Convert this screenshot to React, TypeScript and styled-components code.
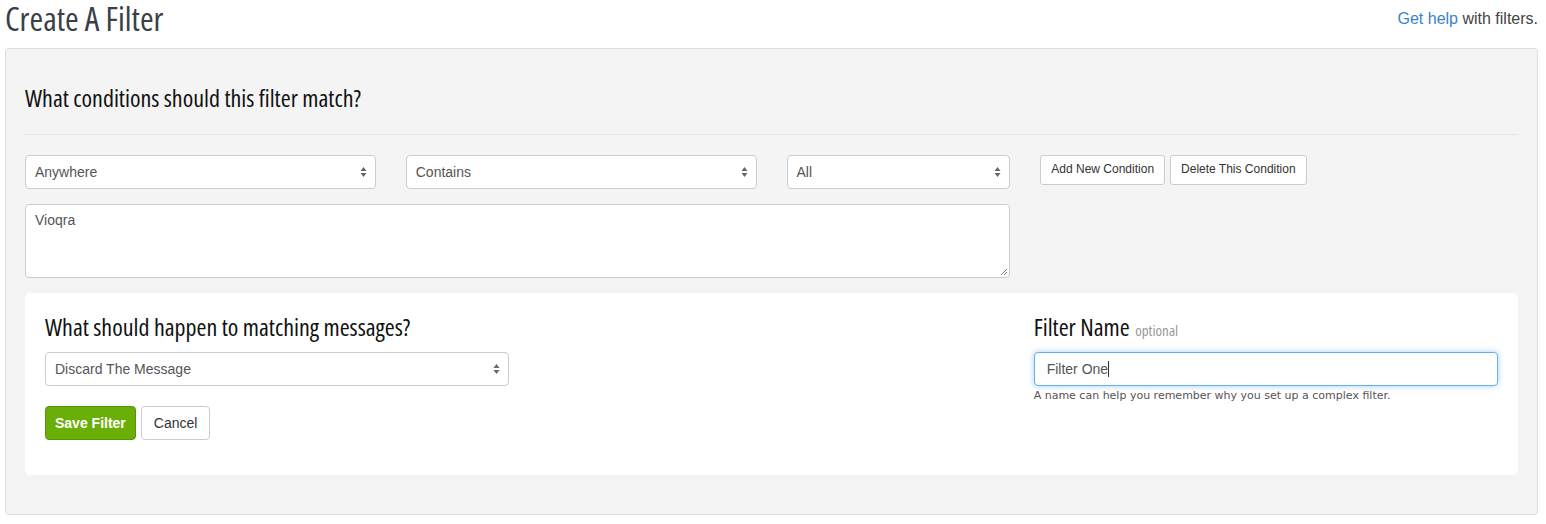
import { createGlobalStyle, styled } from "styled-components";

const GlobalStyle = createGlobalStyle`
	html, body {
		margin: 0;
		padding: 0;
		background: #ffffff;
	}
	body {
		font-family: "Liberation Sans", Arial, sans-serif;
		color: #333;
	}
	* {
		box-sizing: border-box;
	}
`;

const Page = styled.div`
	padding: 0 8px 0 5px;
`;

const Header = styled.div`
	display: flex;
	align-items: flex-start;
	justify-content: space-between;
	height: 48px;
	padding-top: 2px;
`;

const Title = styled.h1`
	margin: 0;
	font-family: "Open Sans", sans-serif;
	font-stretch: condensed;
	font-weight: 400;
	font-size: 33px;
	line-height: 34px;
	color: #3a4047;
`;

const HelpText = styled.p`
	margin: 0;
	padding-top: 8px;
	font-size: 16px;
	line-height: 18px;
	color: #444;

	a {
		color: #3a84c6;
		text-decoration: none;
	}
`;

const Panel = styled.div`
	background: #f4f4f4;
	border: 1px solid #ddd;
	border-radius: 4px;
	padding: 36px 19px 39px;
`;

const SectionTitle = styled.h2`
	margin: 0;
	height: 26px;
	font-family: "Open Sans", sans-serif;
	font-stretch: condensed;
	font-weight: 400;
	font-size: 24px;
	line-height: 26px;
	color: #111;
	white-space: nowrap;

	small {
		font-size: 15px;
		line-height: 1;
		color: #999;
		margin-left: 1px;
	}
`;

const Divider = styled.hr`
	margin: 23px 0 20px;
	border: 0;
	border-top: 1px solid #e6e6e6;
`;

const Grid = styled.div`
	display: grid;
	grid-template-columns: repeat(12, 1fr);
	column-gap: 30px;
	row-gap: 15px;
	align-items: start;
`;

const Col = styled.div<{ $span: number }>`
	grid-column: span ${(p) => p.$span};
`;

const SelectBox = styled.div`
	display: flex;
	align-items: center;
	justify-content: space-between;
	height: 34px;
	padding: 0 8px 0 9px;
	background: #fff;
	border: 1px solid #ccc;
	border-radius: 4px;
	font-size: 14px;
	color: #555;
`;

const TextInput = styled.div`
	display: flex;
	align-items: center;
	height: 34px;
	padding: 0 12px;
	background: #fff;
	border: 1px solid #66afe9;
	border-radius: 4px;
	box-shadow: 0 0 6px rgba(102, 175, 233, 0.6);
	font-size: 14px;
	color: #555;
`;

const Caret = styled.span`
	display: inline-block;
	width: 1px;
	height: 16px;
	background: #333;
`;

const TextArea = styled.div`
	position: relative;
	height: 74px;
	padding: 7px 9px;
	background: #fff;
	border: 1px solid #ccc;
	border-radius: 4px;
	font-size: 14px;
	color: #555;
`;

const Grip = styled.svg`
	position: absolute;
	right: 1px;
	bottom: 1px;
`;

const ButtonRow = styled.div`
	display: flex;
	gap: 5px;
`;

const SmallButton = styled.button`
	height: 30px;
	padding: 0 10px 2px;
	background: #fff;
	border: 1px solid #ccc;
	border-radius: 3px;
	font-family: "Liberation Sans", Arial, sans-serif;
	font-size: 12px;
	color: #333;
`;

const Button = styled.button<{ $primary?: boolean }>`
	height: 34px;
	padding: 0 ${(p) => (p.$primary ? 9 : 12)}px;
	background: ${(p) => (p.$primary ? "#6aae08" : "#fff")};
	border: 1px solid ${(p) => (p.$primary ? "#55930a" : "#ccc")};
	border-radius: 4px;
	font-family: "Liberation Sans", Arial, sans-serif;
	font-size: 14px;
	font-weight: ${(p) => (p.$primary ? 700 : 400)};
	color: ${(p) => (p.$primary ? "#fff" : "#333")};
`;

const Card = styled.div`
	margin-top: 15px;
	background: #fff;
	border-radius: 5px;
	padding: 21px 20px 35px;
	display: grid;
	grid-template-columns: repeat(3, 1fr);
	column-gap: 30px;
`;

const Field = styled.div<{ $col: number }>`
	grid-column: ${(p) => p.$col};
	display: flex;
	flex-direction: column;
	gap: 12px;
`;

const Actions = styled.div`
	display: flex;
	gap: 5px;
	margin-top: 8px;
`;

const Hint = styled.p`
	margin: -9px 0 0;
	font-family: "DejaVu Sans", Verdana, sans-serif;
	font-size: 11px;
	color: #555;
`;

const Arrows = () => (
	<svg width="7" height="12" viewBox="0 0 7 12">
		<path d="M3.5 1 L6.5 5 L0.5 5 Z" fill="#666" />
		<path d="M3.5 11 L6.5 7 L0.5 7 Z" fill="#666" />
	</svg>
);

const Select = ({ value }: { value: string }) => (
	<SelectBox>
		<span>{value}</span>
		<Arrows />
	</SelectBox>
);

const App = () => {
	return (
		<Page>
			<GlobalStyle />
			<Header>
				<Title>Create A Filter</Title>
				<HelpText>
					<a href="#">Get help</a> with filters.
				</HelpText>
			</Header>
			<Panel>
				<SectionTitle>What conditions should this filter match?</SectionTitle>
				<Divider />
				<Grid>
					<Col $span={3}>
						<Select value="Anywhere" />
					</Col>
					<Col $span={3}>
						<Select value="Contains" />
					</Col>
					<Col $span={2}>
						<Select value="All" />
					</Col>
					<Col $span={4}>
						<ButtonRow>
							<SmallButton>Add New Condition</SmallButton>
							<SmallButton>Delete This Condition</SmallButton>
						</ButtonRow>
					</Col>
					<Col $span={8}>
						<TextArea>
							Vioqra
							<Grip width="10" height="10" viewBox="0 0 10 10">
								<path d="M9 3 L3 9 M9 6 L6 9" stroke="#777" strokeWidth="1" />
							</Grip>
						</TextArea>
					</Col>
				</Grid>
				<Card>
					<Field $col={1}>
						<SectionTitle>What should happen to matching messages?</SectionTitle>
						<Select value="Discard The Message" />
						<Actions>
							<Button $primary>Save Filter</Button>
							<Button>Cancel</Button>
						</Actions>
					</Field>
					<Field $col={3}>
						<SectionTitle>
							Filter Name <small>optional</small>
						</SectionTitle>
						<TextInput>
							Filter One
							<Caret />
						</TextInput>
						<Hint>A name can help you remember why you set up a complex filter.</Hint>
					</Field>
				</Card>
			</Panel>
		</Page>
	);
};

export default App;
